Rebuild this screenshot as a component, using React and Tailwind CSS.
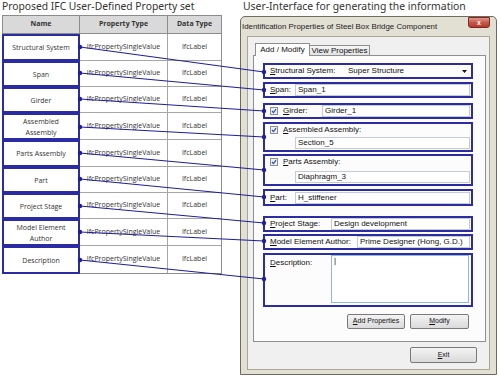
import React from "react";

const rows = [
  { name: ["Structural System"], h: "h-[27px]" },
  { name: ["Span"], h: "h-[26px]" },
  { name: ["Girder"], h: "h-[26px]" },
  { name: ["Assembled", "Assembly"], h: "h-[27px]" },
  { name: ["Parts Assembly"], h: "h-[27px]" },
  { name: ["Part"], h: "h-[26px]" },
  { name: ["Project Stage"], h: "h-[26px]" },
  { name: ["Model Element", "Author"], h: "h-[27px]" },
  { name: ["Description"], h: "h-[27px]" },
];

const links = [
  [47, 72],
  [73, 90],
  [99, 111],
  [127, 137],
  [153, 170],
  [179, 197],
  [206, 223],
  [232, 241],
  [260, 279],
];

function U({ c, rest }) {
  return (
    <span>
      <span className="underline underline-offset-[1px]">{c}</span>
      {rest}
    </span>
  );
}

function Field({ children, cls = "" }) {
  return (
    <div
      className={
        "h-[12px] bg-white border border-[#c3ccd6] flex items-center pl-[2px] text-[8px] text-[#111] " +
        cls
      }
    >
      {children}
    </div>
  );
}

function Check() {
  return (
    <div className="w-[8px] h-[8px] border border-[#8e8f8f] bg-[#e8eef6] flex items-center justify-center shrink-0">
      <svg width="6" height="6" viewBox="0 0 6 6">
        <path d="M1 3 L2.5 4.6 L5 1.2" stroke="#2c4f9c" strokeWidth="1.1" fill="none" />
      </svg>
    </div>
  );
}

const box = "border-2 border-[#2b2ba3] w-[210px]";

export default function App() {
  return (
    <div
      className="relative w-[500px] h-[377px] bg-white overflow-hidden flex"
      style={{ fontFamily: "'Liberation Sans', Arial, sans-serif" }}
    >
      {/* LEFT */}
      <div className="w-[240px] pl-[2px] flex flex-col">
        <div
          className="h-[15px] text-[10.3px] leading-[13px] text-[#333] whitespace-nowrap"
          style={{ fontFamily: "'Noto Sans', sans-serif" }}
        >
          Proposed IFC User-Defined Property set
        </div>
        <div
          className="w-[220px] border border-[#8c8c8c] text-[7px] text-[#333]"
          style={{ fontFamily: "'Open Sans', 'Noto Sans', sans-serif" }}
        >
          <div className="flex h-[18px] bg-[#d9d9d9] border-b border-[#8c8c8c] font-bold">
            <div className="w-[77px] border-r border-[#8c8c8c] flex items-center justify-center">Name</div>
            <div className="w-[88px] border-r border-[#8c8c8c] flex items-center justify-center">Property Type</div>
            <div className="flex-1 flex items-center justify-center">Data Type</div>
          </div>
          {rows.map((r, i) => (
            <div key={i} className={"flex border-b border-[#a6a6a6] last:border-b-0 " + r.h}>
              <div className="w-[77px] border-r border-[#a6a6a6] relative">
                <div className="absolute -left-[1px] -top-[0px] -bottom-[1px] -right-[1px] border-2 border-[#2b2ba3] flex flex-col items-center justify-center leading-[11px]">
                  {r.name.map((n, j) => (
                    <span key={j}>{n}</span>
                  ))}
                </div>
              </div>
              <div className="w-[88px] border-r border-[#a6a6a6] flex items-center justify-center">
                IfcPropertySingleValue
              </div>
              <div className="flex-1 flex items-center justify-center">IfcLabel</div>
            </div>
          ))}
        </div>
      </div>

      {/* RIGHT */}
      <div className="flex flex-col">
        <div
          className="h-[16px] pl-[3px] text-[10.4px] leading-[13px] text-[#333] whitespace-nowrap"
          style={{ fontFamily: "'Noto Sans', sans-serif" }}
        >
          User-Interface for generating the information
        </div>
        <div className="w-[257px] h-[359px] rounded-t-[5px] border border-[#6d6a60] bg-[#e2dfd3] flex flex-col">
          {/* title bar */}
          <div className="h-[19px] flex items-start justify-between pl-[1px] pr-[6px]">
            <span className="mt-[5px] text-[7.9px] leading-[9px] text-[#222] whitespace-nowrap">
              Identification Properties of Steel Box Bridge Component
            </span>
            <div className="w-[22px] h-[11px] rounded-b-[3px] bg-gradient-to-b from-[#e0978a] via-[#c8584a] to-[#b3392c] border border-[#7a2a22] flex items-center justify-center">
              <span className="text-white text-[7px] leading-none font-bold">x</span>
            </div>
          </div>
          {/* body */}
          <div className="flex-1 px-[6px] pb-[4px] flex">
            <div className="flex-1 bg-[#f0f0f0] border border-[#a9a597] flex flex-col pl-[5px] pt-[6px]">
              {/* tabs */}
              <div className="flex items-end h-[13px] pl-[2px] relative z-10">
                <div className="h-[13px] w-[55px] bg-white border border-b-0 border-[#8e8f8f] text-[8px] flex items-center justify-center text-[#111]">
                  Add / Modify
                </div>
                <div className="h-[11px] w-[60px] bg-gradient-to-b from-[#f6f6f6] to-[#e2e2e2] border border-l-0 border-[#8e8f8f] text-[8px] flex items-center justify-center text-[#111]">
                  View Properties
                </div>
              </div>
              {/* panel */}
              <div className="w-[233px] h-[287px] -mt-[1px] bg-[#fcfcfc] border border-[#8e8f8f] flex flex-col pl-[9px] text-[8px] text-[#111]">
                {/* 1 */}
                <div className={box + " mt-[7px] h-[16px] flex items-center pl-[5px] pr-[1px]"}>
                  <div className="w-[76px]"><U c="S" rest="tructural System:" /></div>
                  <div className="flex-1 h-[12px] flex items-center justify-between pl-[2px] pr-[3px]">
                    <span>Super Structure</span>
                    <svg width="5" height="3" viewBox="0 0 5 3"><path d="M0 0 H5 L2.5 3 Z" fill="#111" /></svg>
                  </div>
                </div>
                {/* 2 */}
                <div className={box + " mt-[3px] h-[16px] flex items-center pl-[5px] pr-[1px]"}>
                  <div className="w-[25px]"><U c="S" rest="pan:" /></div>
                  <Field cls="flex-1">Span_1</Field>
                </div>
                {/* 3 */}
                <div className={box + " mt-[5px] h-[16px] flex items-center pl-[5px] pr-[1px]"}>
                  <Check />
                  <div className="w-[39px] ml-[5px]"><U c="G" rest="irder:" /></div>
                  <Field cls="flex-1">Girder_1</Field>
                </div>
                {/* 4 */}
                <div className={box + " mt-[3px] h-[30px] flex flex-col pl-[5px] pr-[1px]"}>
                  <div className="h-[11px] flex items-center">
                    <Check />
                    <div className="ml-[5px]"><U c="A" rest="ssembled Assembly:" /></div>
                  </div>
                  <Field cls="mt-[2px] ml-[25px]">Section_5</Field>
                </div>
                {/* 5 */}
                <div className={box + " mt-[2px] h-[32px] flex flex-col pl-[5px] pr-[1px]"}>
                  <div className="h-[12px] flex items-center">
                    <Check />
                    <div className="ml-[5px]"><U c="P" rest="arts Assembly:" /></div>
                  </div>
                  <Field cls="mt-[3px] ml-[25px]">Diaphragm_3</Field>
                </div>
                {/* 6 */}
                <div className={box + " mt-[3px] h-[17px] flex items-center pl-[5px] pr-[1px]"}>
                  <div className="w-[25px]"><U c="P" rest="art:" /></div>
                  <Field cls="flex-1">H_stiffener</Field>
                </div>
                {/* 7 */}
                <div className={box + " mt-[10px] h-[16px] flex items-center pl-[5px] pr-[1px]"}>
                  <div className="w-[61px]"><U c="P" rest="roject Stage:" /></div>
                  <Field cls="flex-1">Design development</Field>
                </div>
                {/* 8 */}
                <div className={box + " mt-[2px] h-[16px] flex items-center pl-[5px] pr-[1px]"}>
                  <div className="w-[87px]"><U c="M" rest="odel Element Author:" /></div>
                  <Field cls="flex-1">Prime Designer (Hong, G.D.)</Field>
                </div>
                {/* 9 */}
                <div className={box + " mt-[3px] h-[54px] flex items-start pl-[5px] pr-[2px]"}>
                  <div className="w-[61px] mt-[2px]"><U c="D" rest="escription:" /></div>
                  <div className="flex-1 h-[48px] bg-white border border-[#8fb8dc] pl-[2px] leading-[10px]">|</div>
                </div>
                {/* buttons */}
                <div className="flex justify-end gap-[5px] pr-[16px] mt-[7px]">
                  <div className="w-[58px] h-[15px] rounded-[2px] border border-[#7a7a7a] bg-gradient-to-b from-[#f4f4f4] to-[#dadada] flex items-center justify-center text-[7px]">
                    <U c="A" rest="dd Properties" />
                  </div>
                  <div className="w-[59px] h-[15px] rounded-[2px] border border-[#7a7a7a] bg-gradient-to-b from-[#f4f4f4] to-[#dadada] flex items-center justify-center text-[7px]">
                    <U c="M" rest="odify" />
                  </div>
                </div>
              </div>
              <div className="flex justify-end pr-[12px] mt-[5px]">
                <div className="w-[67px] h-[16px] rounded-[2px] border border-[#7a7a7a] bg-gradient-to-b from-[#f4f4f4] to-[#dadada] flex items-center justify-center text-[7px] text-[#111]">
                  <U c="E" rest="xit" />
                </div>
              </div>
            </div>
          </div>
        </div>
      </div>

      {/* connectors */}
      <svg className="absolute inset-0 pointer-events-none" width="500" height="377">
        {links.map(([a, b], i) => (
          <g key={i}>
            <line x1="80" y1={a} x2="264" y2={b} stroke="#1e1e9c" strokeWidth="1.2" />
            <circle cx="80" cy={a} r="2.2" fill="#1e1e9c" />
            <circle cx="264" cy={b} r="2.2" fill="#1e1e9c" />
          </g>
        ))}
      </svg>
    </div>
  );
}
